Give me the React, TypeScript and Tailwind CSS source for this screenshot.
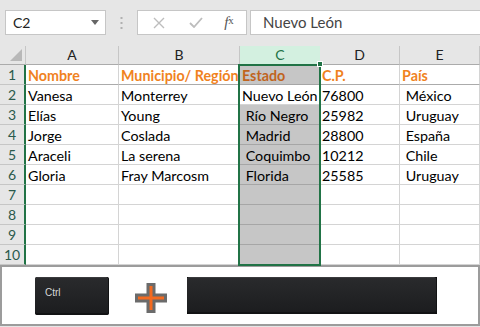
import React from 'react';

const cols = ['A', 'B', 'C', 'D', 'E'];

const rows: string[][] = [
  ['Nombre', 'Municipio/ Región', 'Estado', 'C.P.', 'País'],
  ['Vanesa', 'Monterrey', 'Nuevo León', '76800', ' México'],
  ['Elías', 'Young', ' Río Negro', '25982', ' Uruguay'],
  ['Jorge', 'Coslada', ' Madrid', '28800', ' España'],
  ['Araceli', 'La serena', ' Coquimbo', '10212', ' Chile'],
  ['Gloria', 'Fray Marcosm', ' Florida', '25585', ' Uruguay'],
  ['', '', '', '', ''],
  ['', '', '', '', ''],
  ['', '', '', '', ''],
  ['', '', '', '', ''],
];

const grid = 'grid grid-cols-[26px_93px_121px_80px_80px_80px]';

function Cell({ text, col, row }: { text: string; col: number; row: number }) {
  const isHeader = row === 0;
  const isSel = col === 2 && row !== 1;
  const bg = isSel ? 'bg-[#c6c6c6]' : 'bg-white';
  const border = isSel
    ? 'border-b border-[#a6a6a6]'
    : isHeader
    ? 'border-r border-b border-r-[#d4d4d4] border-b-[#ababab]'
    : 'border-r border-b border-[#d4d4d4]';
  const color = isHeader ? (isSel ? 'text-[#c0641e] font-bold' : 'text-[#f0821e] font-bold') : 'text-black';
  return (
    <div className={`h-[20px] flex items-end pb-[1px] pl-[2px] whitespace-pre overflow-hidden ${bg} ${border} ${color}`}>
      {text}
    </div>
  );
}

function KeyCap({ className, children }: { className: string; children?: React.ReactNode }) {
  return (
    <div className={`bg-[#0c0c0d] ${className}`}>
      <div className="w-full h-full rounded-[3px] bg-gradient-to-b from-[#2a2b2d] to-[#1c1d1f] border-b-2 border-r border-[#121314] shadow-[inset_0_1px_0_#3a3b3d]">
        {children}
      </div>
    </div>
  );
}

export default function App() {
  return (
    <div className="w-[480px] h-[327px] overflow-hidden bg-[#e6e6e6] text-[14.3px] leading-none font-['Lato','Open_Sans',sans-serif] relative">
      {/* Formula bar */}
      <div className="h-[46px] flex items-start pt-[10px] pl-[5px]">
        <div className="w-[101px] h-[25px] bg-white border border-[#c6c6c6] flex items-center justify-between pl-[7px] pr-[6px] text-[#222] text-[14px]">
          <span>C2</span>
          <svg width="8" height="5" viewBox="0 0 8 5"><path d="M0 0h8L4 5z" fill="#666" /></svg>
        </div>
        <div className="w-[31px] h-[25px] flex items-center justify-center">
          <svg width="3" height="14" viewBox="0 0 3 14">
            <rect x="0.5" y="1" width="2" height="2" fill="#b0b0b0" />
            <rect x="0.5" y="6" width="2" height="2" fill="#b0b0b0" />
            <rect x="0.5" y="11" width="2" height="2" fill="#b0b0b0" />
          </svg>
        </div>
        <div className="w-[110px] h-[25px] bg-white border border-[#c6c6c6] flex items-center">
          <div className="w-[38px] flex justify-center ml-[2px]">
            <svg width="12" height="12" viewBox="0 0 12 12"><path d="M1 1l10 10M11 1L1 11" stroke="#bdbdbd" strokeWidth="1.4" /></svg>
          </div>
          <div className="w-[36px] flex justify-center">
            <svg width="14" height="11" viewBox="0 0 14 11"><path d="M1 6l4 4 8-9" stroke="#bdbdbd" strokeWidth="1.8" fill="none" /></svg>
          </div>
          <div className="w-[30px] flex justify-center text-[#555] italic text-[15px] font-['Liberation_Serif',serif]">
            f<span className="text-[11px] not-italic">x</span>
          </div>
        </div>
        <div className="ml-[3px] flex-1 h-[25px] bg-white border border-[#c6c6c6] border-r-0 flex items-center pl-[12px] text-[#444] text-[15px]">
          Nuevo León
        </div>
      </div>

      {/* Column headers */}
      <div className={`${grid} h-[19px] bg-[#e6e6e6]`}>
        <div className="border-r border-b border-[#ababab] border-r-[#c6c6c6] flex items-end justify-end pr-[3px] pb-[3px]">
          <svg width="12" height="12" viewBox="0 0 12 12"><path d="M12 0v12H0z" fill="#b8b8b8" /></svg>
        </div>
        {cols.map((c, i) => (
          <div
            key={c}
            className={`flex items-center justify-center border-b text-[14px] ${
              i === 2
                ? 'bg-[#d3f0e0] text-[#217346] border-b-[#217346]'
                : 'border-r border-[#c6c6c6] border-b-[#ababab] text-[#222]'
            }`}
          >
            {c}
          </div>
        ))}
      </div>

      {/* Rows */}
      {rows.map((r, ri) => (
        <div key={ri} className={grid}>
          <div className="h-[20px] bg-[#e6e6e6] border-b border-[#c6c6c6] border-r-2 border-r-[#217346] flex items-center justify-center text-[14px] text-[#2a5a4c]">
            {ri + 1}
          </div>
          {r.map((t, ci) => (
            <Cell key={ci} text={t} col={ci} row={ri} />
          ))}
        </div>
      ))}

      {/* Selection outline */}
      <div className="absolute left-[238px] top-[64px] w-[83px] h-[202px] border-2 border-[#217346] pointer-events-none" />
      <div className="absolute left-[317px] top-[61px] w-[6px] h-[6px] bg-[#217346] border border-white" />

      {/* Shortcut panel */}
      <div className="h-[61px] bg-white border-2 border-[#9c9c9c] flex items-center">
        <KeyCap className="ml-[33px] w-[74px] h-[38px] rounded-[2px]">
          <div className="pl-[10px] pt-[11px] text-[10px] text-[#d8d8d8] font-['Liberation_Sans',sans-serif]">Ctrl</div>
        </KeyCap>
        <svg className="ml-[25px] mt-[4px]" width="34" height="32" viewBox="0 0 34 32">
          <path d="M17 1v30M1 16h32" stroke="#6b6b6b" strokeWidth="9" />
          <path d="M17 4v24M4 16h26" stroke="#f46a1f" strokeWidth="3" />
        </svg>
        <KeyCap className="ml-[19px] w-[250px] h-[37px]" />
      </div>
    </div>
  );
}
